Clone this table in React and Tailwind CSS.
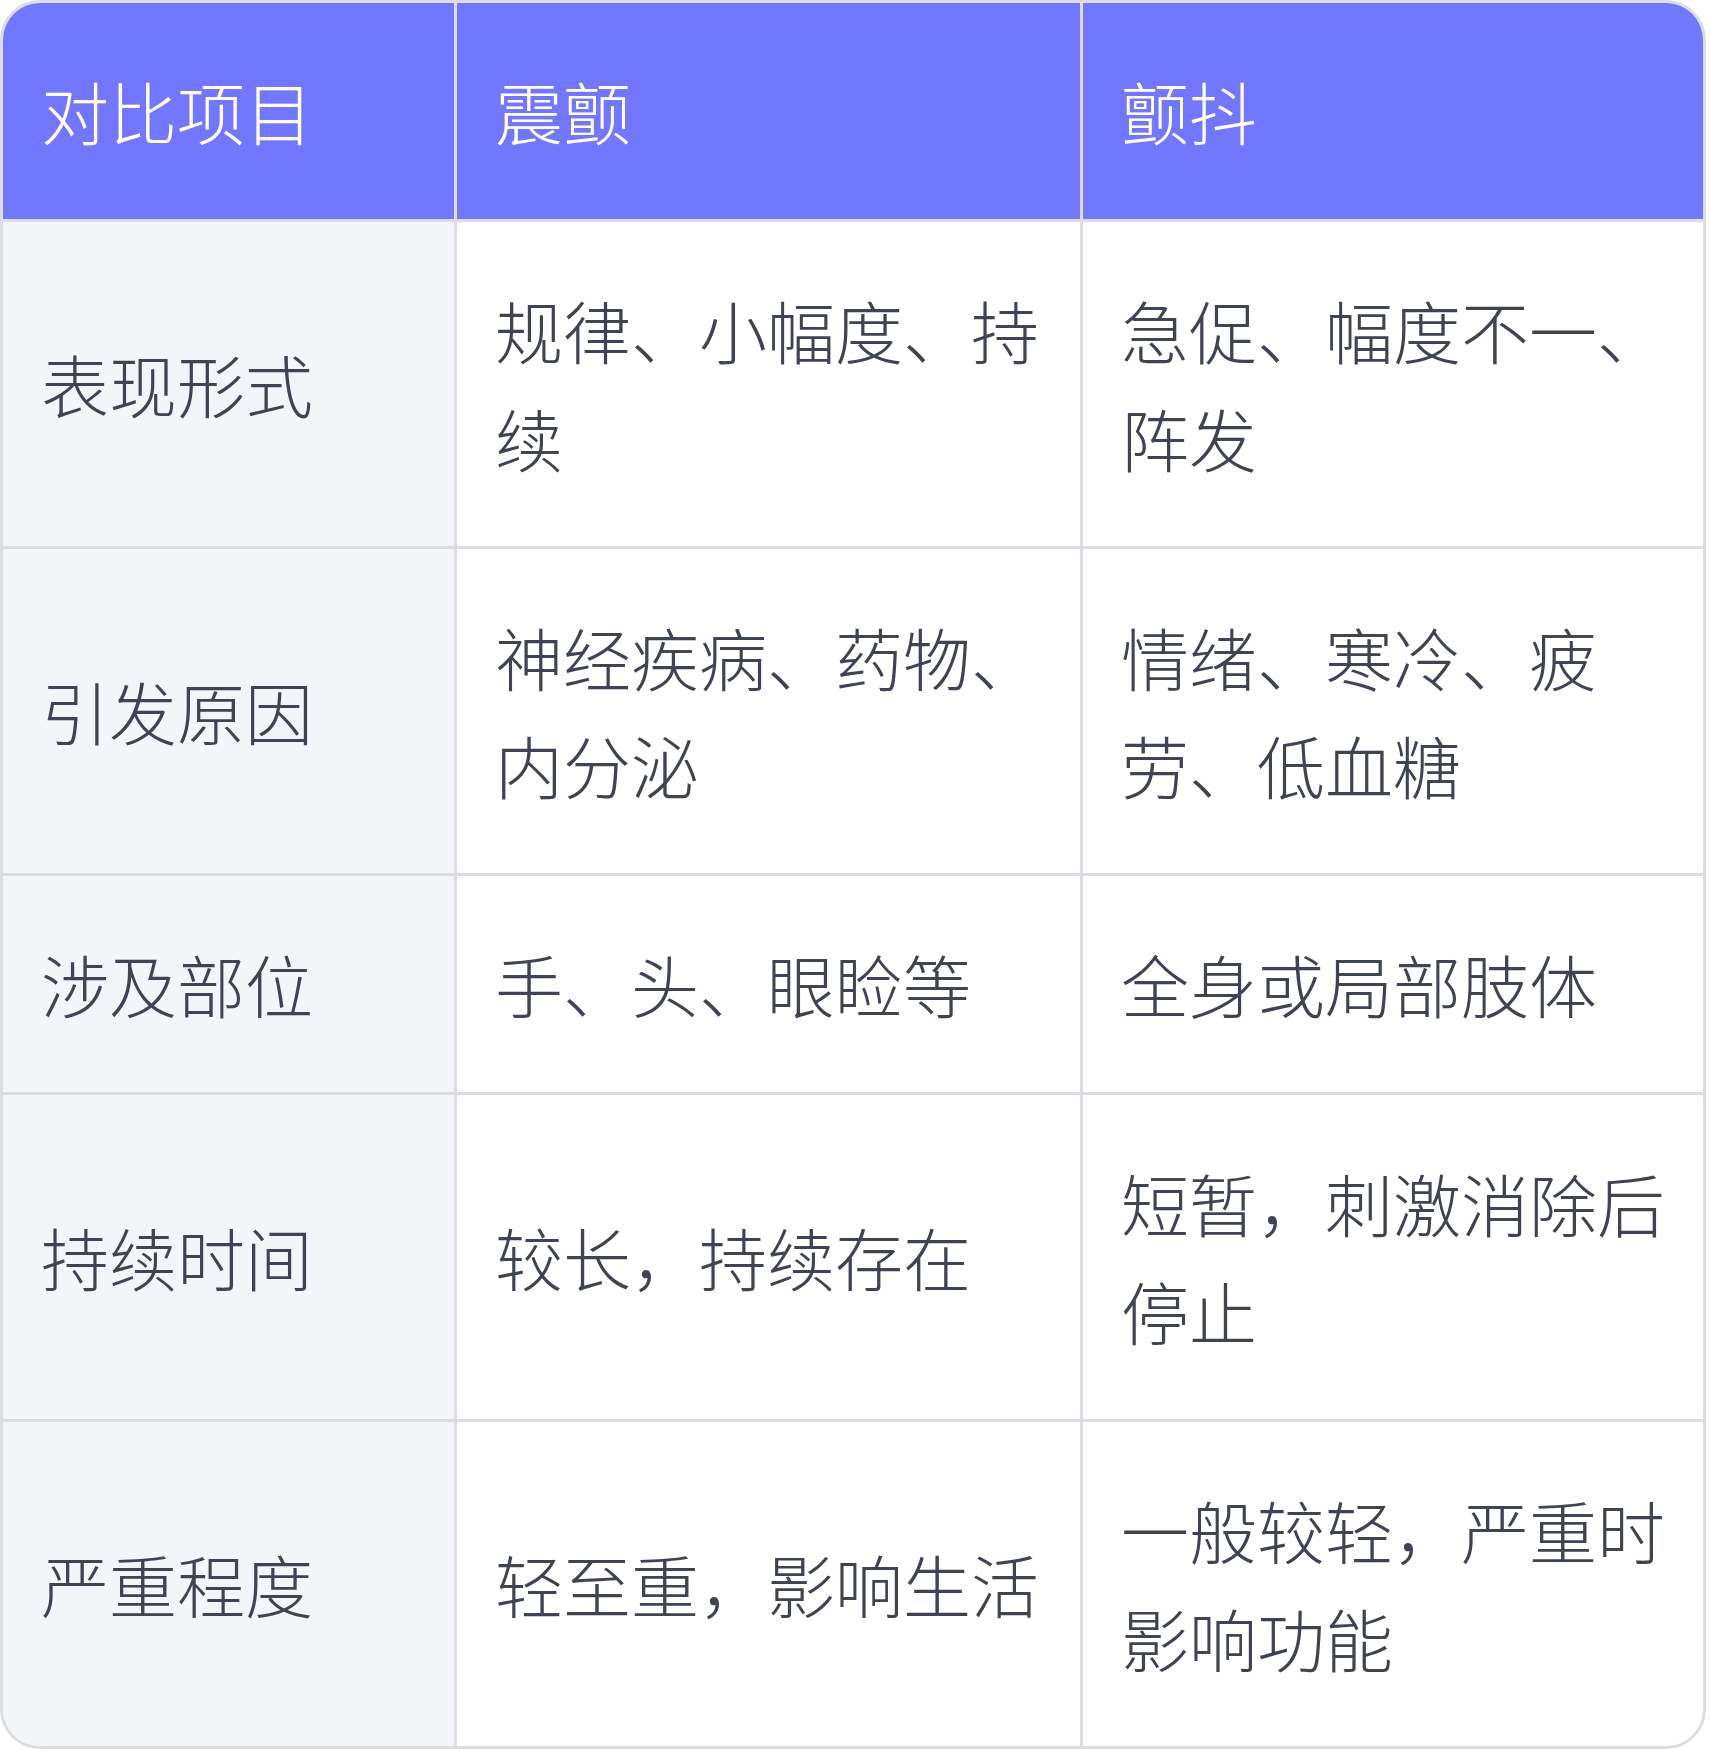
import React from "react";

const rows = [
  ["表现形式", "规律、小幅度、持续", "急促、幅度不一、阵发"],
  ["引发原因", "神经疾病、药物、内分泌", "情绪、寒冷、疲劳、低血糖"],
  ["涉及部位", "手、头、眼睑等", "全身或局部肢体"],
  ["持续时间", "较长，持续存在", "短暂，刺激消除后停止"],
  ["严重程度", "轻至重，影响生活", "一般较轻，严重时影响功能"],
];

const cell = "flex items-center pl-[38px] pr-[36px] py-[54px] text-[68px] leading-[108px] font-light";

export default function App() {
  return (
    <div
      className="w-[1706px] bg-white"
      style={{ fontFamily: '"Noto Sans CJK SC", "Noto Sans", sans-serif' }}
    >
      <div className="overflow-hidden rounded-[40px] border-[3px] border-[#dcdde3]">
        <div className="grid grid-cols-[451px_623px_1fr] gap-[3px] bg-[#dcdde3]">
          {/* header */}
          <div className={`${cell} bg-[#7177ff] text-white`}>对比项目</div>
          <div className={`${cell} bg-[#7177ff] text-white`}>震颤</div>
          <div className={`${cell} bg-[#7177ff] text-white`}>颤抖</div>

          {rows.map((r) => (
            <React.Fragment key={r[0]}>
              <div className={`${cell} bg-[#f4f5f9] text-[#404452]`}>{r[0]}</div>
              <div className={`${cell} bg-white text-[#404452]`}>{r[1]}</div>
              <div className={`${cell} bg-white text-[#404452]`}>{r[2]}</div>
            </React.Fragment>
          ))}
        </div>
      </div>
    </div>
  );
}
